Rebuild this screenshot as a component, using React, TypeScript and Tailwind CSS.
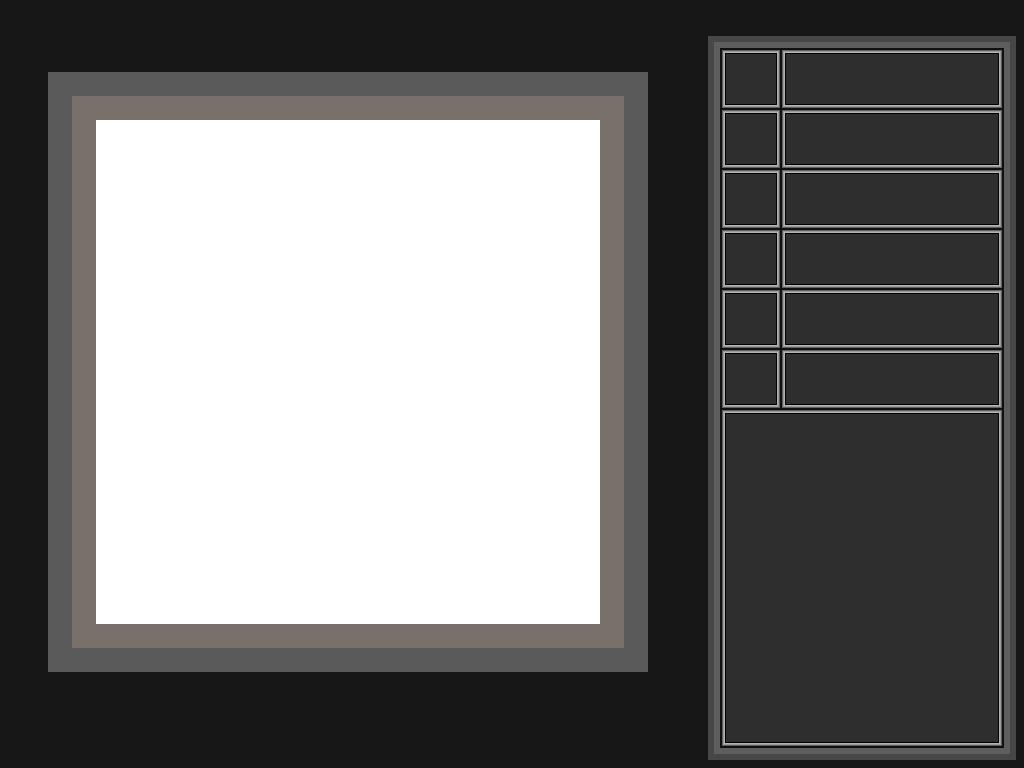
function Cell({ className }: { className: string }) {
  return (
    <div className={`border border-[#5f5f5f] ${className}`}>
      <div className="h-full w-full border border-[#9a9a9a]">
        <div className="h-full w-full border border-[#b4b4b4]">
          <div className="h-full w-full border border-black bg-[#2e2e2e]" />
        </div>
      </div>
    </div>
  );
}

export default function App() {
  const rows = [0, 1, 2, 3, 4, 5];
  return (
    <div className="flex h-[768px] w-[1024px] items-start overflow-hidden bg-[#171717]">
      <div className="ml-[48px] mt-[72px] bg-[#5a5a5a] p-[24px]">
        <div className="bg-[#79706b] p-[24px]">
          <div className="h-[504px] w-[504px] bg-white" />
        </div>
      </div>

      <div className="ml-[60px] mt-[36px] border-[6px] border-[#474747]">
        <div className="border-[6px] border-[#5e5e5e]">
          <div className="flex h-[700px] w-[284px] flex-col gap-[2px] bg-[#111111] p-[2px]">
            {rows.map((r) => (
              <div key={r} className="flex h-[58px] gap-[2px]">
                <Cell className="h-[58px] w-[58px]" />
                <Cell className="h-[58px] w-[220px]" />
              </div>
            ))}
            <Cell className="h-[336px] w-[280px]" />
          </div>
        </div>
      </div>
    </div>
  );
}
